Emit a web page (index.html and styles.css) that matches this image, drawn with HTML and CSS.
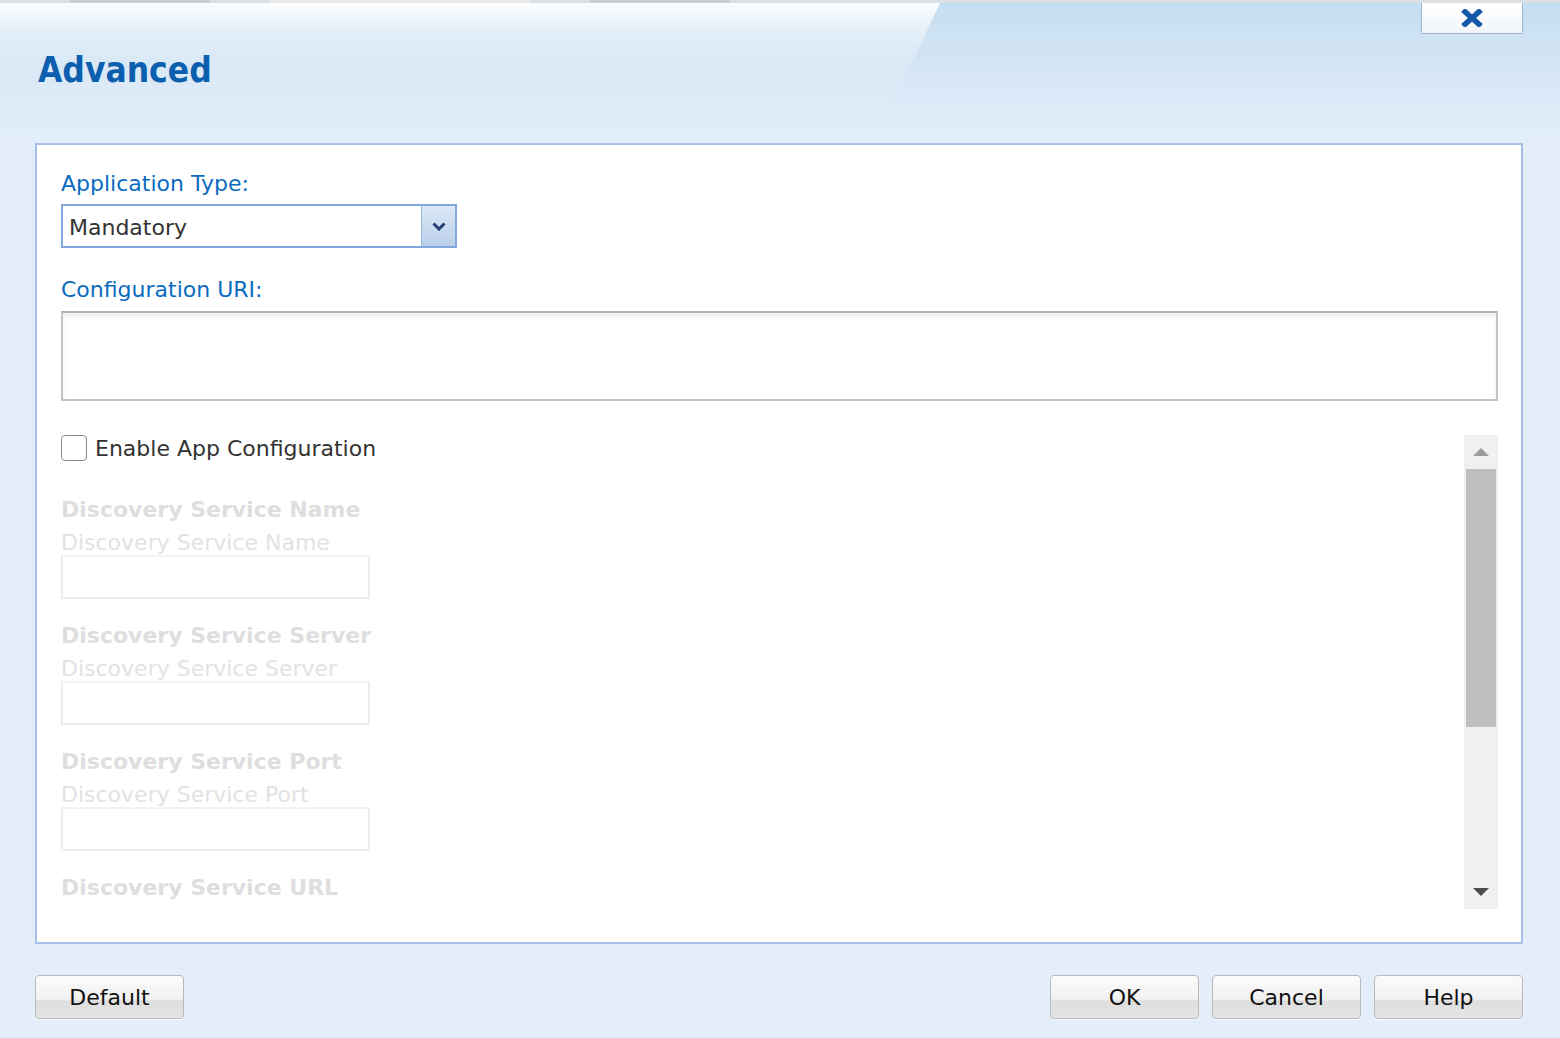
FILE: index.html
```html
<!DOCTYPE html>
<html lang="en">
<head>
    <meta charset="UTF-8">
    <meta name="viewport" content="width=device-width, initial-scale=1.0">
    <title>Advanced</title>
    <link rel="stylesheet" href="styles.css">
</head>
<body>
    <div class="behind">
        <span class="behind-tab"></span>
        <span class="behind-tab wide"></span>
        <span class="behind-tab"></span>
    </div>

    <div class="dialog">
        <header class="dialog-header">
            <h1>Advanced</h1>
            <button class="close-btn" title="Close">
                <svg width="22" height="18" viewBox="0 0 22 18">
                    <path d="M2 1 L20 17 M20 1 L2 17" stroke="#1359a8" stroke-width="5.5" fill="none"/>
                </svg>
            </button>
        </header>

        <main class="panel">
            <label class="field-label">Application Type:</label>
            <div class="select-box">
                <span class="select-value">Mandatory</span>
                <span class="select-arrow">
                    <svg width="14" height="9" viewBox="0 0 14 9">
                        <path d="M1.5 1.5 L7 7 L12.5 1.5" stroke="#243f73" stroke-width="3" fill="none"/>
                    </svg>
                </span>
            </div>

            <label class="field-label uri-label">Configuration URI:</label>
            <div class="uri-input"></div>

            <div class="scroll-area">
                <div class="scroll-content">
                    <label class="check-row">
                        <span class="checkbox"></span>
                        Enable App Configuration
                    </label>

                    <div class="faded-group">
                        <div class="faded-title">Discovery Service Name</div>
                        <div class="faded-label">Discovery Service Name</div>
                        <div class="faded-input"></div>
                    </div>
                    <div class="faded-group">
                        <div class="faded-title">Discovery Service Server</div>
                        <div class="faded-label">Discovery Service Server</div>
                        <div class="faded-input"></div>
                    </div>
                    <div class="faded-group">
                        <div class="faded-title">Discovery Service Port</div>
                        <div class="faded-label">Discovery Service Port</div>
                        <div class="faded-input"></div>
                    </div>
                    <div class="faded-group">
                        <div class="faded-title">Discovery Service URL</div>
                    </div>
                </div>

                <div class="scrollbar">
                    <span class="sb-btn"><span class="arrow-up"></span></span>
                    <div class="sb-track"><div class="sb-thumb"></div></div>
                    <span class="sb-btn"><span class="arrow-down"></span></span>
                </div>
            </div>
        </main>

        <footer class="dialog-footer">
            <button class="btn">Default</button>
            <div class="btn-group">
                <button class="btn">OK</button>
                <button class="btn">Cancel</button>
                <button class="btn">Help</button>
            </div>
        </footer>
    </div>
</body>
</html>
```

FILE: styles.css
```css
* {
    margin: 0;
    padding: 0;
    box-sizing: border-box;
    font-family: "DejaVu Sans", Verdana, sans-serif;
}

body {
    width: 1560px;
    height: 1038px;
    overflow: hidden;
    background: #e3eefa;
}

/* window peeking out behind the dialog */
.behind {
    height: 3px;
    display: flex;
    gap: 60px;
    background: #dcdfe3;
    padding-left: 70px;
}

.behind-tab {
    width: 140px;
    background: #c9ccd2;
}

.behind-tab.wide {
    width: 260px;
    background: #e9eaec;
}

.dialog {
    padding: 0 37px 0 35px;
}

.dialog-header {
    position: relative;
    height: 140px;
    margin: 0 -37px 0 -35px;
    padding: 0 37px 0 38px;
    display: flex;
    justify-content: space-between;
    align-items: flex-start;
    background: linear-gradient(to bottom, #c4def1 0, #cfe3f3 40px, #dbe8f7 90px, #e3eefa 140px);
}

/* whitish sheen on the left of the header */
.dialog-header::before {
    content: "";
    position: absolute;
    left: 0;
    top: 0;
    width: 940px;
    height: 140px;
    background: linear-gradient(to bottom, rgba(255,255,255,0.95) 0, rgba(255,255,255,0.45) 30px, rgba(255,255,255,0.15) 60px, rgba(255,255,255,0) 110px);
    clip-path: polygon(0 0, 100% 0, 93% 100%, 0 100%);
}

.dialog-header h1 {
    position: relative;
    margin-top: 47px;
    font-family: "DejaVu Sans Condensed", "DejaVu Sans", sans-serif;
    font-weight: bold;
    font-size: 35px;
    line-height: 40px;
    color: #0c5fae;
}

.close-btn {
    position: relative;
    width: 102px;
    height: 31px;
    display: flex;
    align-items: center;
    justify-content: center;
    background: linear-gradient(to bottom, #ffffff, #f1f5fa);
    border: 1px solid #9fb3cc;
    border-top: none;
    border-radius: 0 0 2px 2px;
    cursor: pointer;
}

.panel {
    height: 801px;
    background: #ffffff;
    border: 2px solid #a7bfe9;
    padding: 26px 23px 27px 24px;
    display: flex;
    flex-direction: column;
    align-items: flex-start;
}

.field-label {
    font-size: 22px;
    line-height: 26px;
    color: #0b6bc0;
}

.select-box {
    margin-top: 7px;
    width: 396px;
    height: 44px;
    display: flex;
    border: 2px solid #80a8dc;
    background: #ffffff;
}

.select-value {
    flex: 1;
    padding: 2px 0 0 6px;
    font-size: 22px;
    line-height: 40px;
    color: #333333;
}

.select-arrow {
    width: 34px;
    display: flex;
    align-items: center;
    justify-content: center;
    border-left: 1px solid #9ab9e2;
    background: linear-gradient(to bottom, #dce8f6, #b9cfe9);
}

.uri-label {
    margin-top: 29px;
}

.uri-input {
    margin-top: 8px;
    width: 100%;
    height: 90px;
    border: 2px solid #c3c3cb;
    border-top-color: #b0b0b8;
    box-shadow: inset 0 4px 5px rgba(0,0,0,0.06);
}

.scroll-area {
    margin-top: 34px;
    width: 100%;
    height: 479px;
    display: flex;
    align-items: flex-start;
}

.scroll-content {
    flex: 1;
    height: 100%;
    overflow: hidden;
}

.check-row {
    display: flex;
    align-items: center;
    gap: 8px;
    height: 26px;
    font-size: 22px;
    color: #333333;
}

.checkbox {
    width: 26px;
    height: 26px;
    border: 1px solid #8a8a8a;
    border-radius: 4px;
    background: #ffffff;
}

.faded-group {
    margin-bottom: 24px;
}

.check-row + .faded-group {
    margin-top: 36px;
}

.faded-title {
    font-size: 22px;
    font-weight: bold;
    line-height: 26px;
    color: #dedee0;
    margin-bottom: 7px;
}

.faded-label {
    font-size: 22px;
    line-height: 26px;
    color: #e2e2e4;
}

.faded-input {
    width: 309px;
    height: 44px;
    margin-top: -1px;
    border: 2px solid #ededee;
    border-top-color: #f3f3f4;
}

.scrollbar {
    width: 34px;
    height: 474px;
    display: flex;
    flex-direction: column;
    background: #f0eff2;
}

.sb-btn {
    height: 34px;
    display: flex;
    align-items: center;
    justify-content: center;
}

.arrow-up {
    width: 0;
    height: 0;
    border-left: 8px solid transparent;
    border-right: 8px solid transparent;
    border-bottom: 8px solid #9c9c9c;
}

.arrow-down {
    width: 0;
    height: 0;
    border-left: 8px solid transparent;
    border-right: 8px solid transparent;
    border-top: 8px solid #4d4d4d;
}

.sb-track {
    flex: 1;
    padding: 0 2px;
}

.sb-thumb {
    height: 258px;
    background: #bfbfbf;
}

.dialog-footer {
    padding-top: 31px;
    display: flex;
    justify-content: space-between;
}

.btn-group {
    display: flex;
    gap: 13px;
}

.btn {
    width: 149px;
    height: 44px;
    font-size: 22px;
    color: #111111;
    border: 1px solid #b9b9b9;
    border-radius: 4px;
    background: linear-gradient(to bottom, #fbfbfb 0, #f1f1f1 55%, #dedede 60%, #e4e4e4 100%);
    box-shadow: 0 1px 1px rgba(255,255,255,0.8);
    cursor: pointer;
}
```
